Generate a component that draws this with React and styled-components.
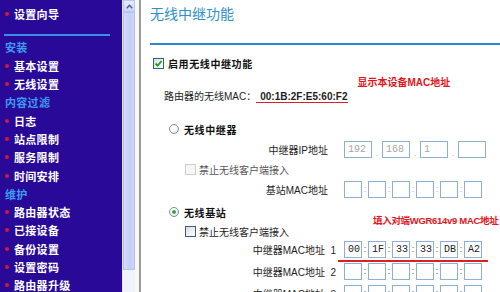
import React from 'react';
import styled, { createGlobalStyle } from 'styled-components';

const Global = createGlobalStyle`
  html, body { margin: 0; padding: 0; background: #fff; }
  body {
    width: 500px; height: 292px; overflow: hidden;
    font-family: "Liberation Sans", "Noto Sans CJK SC", sans-serif;
  }
`;

const Page = styled.div`
  display: flex;
  width: 500px;
  height: 292px;
  overflow: hidden;
`;

const Sidebar = styled.nav`
  width: 122px;
  flex: none;
  background: #290a98;
  display: flex;
  flex-direction: column;
  padding-top: 5px;
  box-sizing: border-box;
  overflow: hidden;
`;

const NavItem = styled.div`
  height: 18.3px;
  flex: none;
  display: flex;
  align-items: center;
  gap: 5px;
  padding-left: 5px;
  color: ${p => (p.$header ? '#3d9cf2' : '#ffffff')};
  font-family: "Noto Sans CJK SC", sans-serif;
  font-size: 11px;
  font-weight: 700;
  letter-spacing: 0.3px;
  white-space: nowrap;
`;

const Bullet = styled.span`
  width: 4px;
  height: 4px;
  border-radius: 50%;
  background: #d8163c;
  flex: none;
`;

const NavRule = styled.div`
  flex: none;
  margin: 11px 12px 2px 4px;
  height: 2px;
  background: #3a8ee8;
`;

const Scrollbar = styled.div`
  width: 13px;
  flex: none;
  display: flex;
  flex-direction: column;
  background: #f1f3fb;
  border-left: 1px solid #dfe3f6;
  box-sizing: border-box;
`;

const ScrollBtn = styled.div`
  height: 12px;
  flex: none;
  background: linear-gradient(#e6ecfc, #c9d5f7);
  border: 1px solid #bac8f0;
  box-sizing: border-box;
  display: flex;
  align-items: center;
  justify-content: center;
`;

const Thumb = styled.div`
  height: 258px;
  flex: none;
  background: linear-gradient(90deg, #d3dcf8, #c3cff5 60%, #cdd7f7);
  border: 1px solid #b3c1ee;
  box-sizing: border-box;
`;

const FrameGap = styled.div`
  width: 4px;
  flex: none;
  background: #f7f7f4;
`;

const FrameEdge = styled.div`
  width: 2px;
  flex: none;
  background: #9a9a9a;
`;

const Main = styled.main`
  flex: 1;
  min-width: 0;
  padding-left: 9px;
  display: flex;
  flex-direction: column;
  font-size: 10px;
  color: #1e1e1e;
`;

const Title = styled.h1`
  margin: 0;
  height: 26px;
  line-height: 26px;
  font-family: "Noto Sans CJK SC", sans-serif;
  font-size: 14px;
  font-weight: 400;
  color: #2e90c6;
  white-space: nowrap;
`;

const Rule = styled.div`
  flex: none;
  margin-top: 17px;
  height: 2px;
  background: #2a86d0;
`;

const Row = styled.div`
  flex: none;
  display: flex;
  align-items: center;
  height: ${p => p.$h || 20}px;
  margin-top: ${p => p.$mt || 0}px;
  padding-left: ${p => p.$pl || 0}px;
  gap: ${p => (p.$gap == null ? 0 : p.$gap)}px;
  white-space: nowrap;
`;

const Strong = styled.span`
  font-weight: 700;
  letter-spacing: 0.6px;
  font-size: 10px;
  color: #111;
`;

const Text = styled.span`
  font-size: 10px;
  color: ${p => (p.$muted ? '#555' : '#1e1e1e')};
`;

const Box = styled.span`
  width: 11px;
  height: 11px;
  flex: none;
  box-sizing: border-box;
  border: 1px solid ${p => (p.$disabled ? '#cfcfcf' : '#335f94')};
  background: ${p => (p.$disabled ? '#f6f6f6' : 'linear-gradient(135deg, #dcdcd6, #ffffff)')};
  display: flex;
  align-items: center;
  justify-content: center;
`;

const RadioDot = styled.span`
  width: 10px;
  height: 10px;
  flex: none;
  border-radius: 50%;
  box-sizing: border-box;
  border: 1px solid #7d8fa8;
  background: radial-gradient(circle at 40% 40%, #ffffff 35%, #dcdcdc);
  display: flex;
  align-items: center;
  justify-content: center;
  &::after {
    content: '';
    width: 4px;
    height: 4px;
    border-radius: 50%;
    background: ${p => (p.$checked ? '#35a83a' : 'transparent')};
  }
`;

const MacBlock = styled.div`
  flex: none;
  display: flex;
  height: 28px;
  padding-left: 14px;
  white-space: nowrap;
`;

const MacText = styled.div`
  align-self: flex-end;
  height: 14px;
  line-height: 14px;
  font-size: 10px;
`;

const MacValue = styled.span`
  font-weight: 700;
  padding-left: 4px;
  border-bottom: 1.5px solid #e02020;
`;

const Note = styled.span`
  align-self: flex-start;
  line-height: 14px;
  font-weight: 700;
  font-size: ${p => p.$size || 10}px;
  letter-spacing: ${p => p.$ls || 0}px;
  color: #e5141b;
  margin-left: ${p => p.$ml || 0}px;
  margin-top: ${p => p.$mtop || 0}px;
  white-space: nowrap;
`;

const Label = styled.span`
  width: ${p => p.$w}px;
  margin-right: ${p => p.$gap}px;
  flex: none;
  text-align: right;
  font-size: 10px;
`;

const Field = styled.span`
  width: ${p => p.$w}px;
  height: 17px;
  flex: none;
  box-sizing: border-box;
  border: 1px solid #8fb0d6;
  background: #fff;
  padding-left: 3px;
  font-family: "Liberation Mono", monospace;
  font-size: 10px;
  line-height: 15px;
  color: ${p => (p.$dim ? '#a8a8a8' : '#222')};
  overflow: hidden;
`;

const Sep = styled.span`
  width: ${p => p.$w}px;
  height: 17px;
  flex: none;
  display: flex;
  align-items: ${p => (p.$dot ? 'flex-end' : 'center')};
  justify-content: center;
  font-size: 9px;
  line-height: 10px;
  color: ${p => (p.$dim ? '#b0b0b0' : '#555')};
`;

const Underline = styled.div`
  flex: none;
  margin-top: 2px;
  margin-left: 188px;
  width: 150px;
  height: 2px;
  background: #e02020;
`;

const navItems = [
  { t: '设置向导' },
  { rule: true },
  { t: '安装', h: true },
  { t: '基本设置' },
  { t: '无线设置' },
  { t: '内容过滤', h: true },
  { t: '日志' },
  { t: '站点限制' },
  { t: '服务限制' },
  { t: '时间安排' },
  { t: '维护', h: true },
  { t: '路由器状态' },
  { t: '已接设备' },
  { t: '备份设置' },
  { t: '设置密码' },
  { t: '路由器升级' },
];

function Check() {
  return (
    <svg width="9" height="9" viewBox="0 0 9 9">
      <path d="M1.5 4.5 L3.6 6.6 L7.6 2" fill="none" stroke="#21a121" strokeWidth="1.8" />
    </svg>
  );
}

function IpFields({ values }) {
  return values.map((v, i) => (
    <React.Fragment key={i}>
      {i > 0 && <Sep $w={10} $dot $dim>.</Sep>}
      <Field $w={28} $dim>{v}</Field>
    </React.Fragment>
  ));
}

function MacFields({ values, dim }) {
  return values.map((v, i) => (
    <React.Fragment key={i}>
      {i > 0 && <Sep $w={6} $dim={dim}>:</Sep>}
      <Field $w={18}>{v}</Field>
    </React.Fragment>
  ));
}

const empty6 = ['', '', '', '', '', ''];

export default function App() {
  return (
    <>
      <Global />
      <Page>
        <Sidebar>
          {navItems.map((n, i) =>
            n.rule ? (
              <NavRule key={i} />
            ) : (
              <NavItem key={i} $header={n.h}>
                {!n.h && <Bullet />}
                {n.t}
              </NavItem>
            )
          )}
        </Sidebar>
        <Scrollbar>
          <ScrollBtn>
            <svg width="7" height="5" viewBox="0 0 7 5">
              <path d="M0.8 4.2 L3.5 1.3 L6.2 4.2" fill="none" stroke="#4d6185" strokeWidth="1.4" />
            </svg>
          </ScrollBtn>
          <Thumb />
        </Scrollbar>
        <FrameGap />
        <FrameEdge />
        <Main>
          <Title>无线中继功能</Title>
          <Rule />
          <Row $h={26} $mt={5} $pl={3} $gap={4}>
            <Box><Check /></Box>
            <Strong>启用无线中继功能</Strong>
          </Row>
          <MacBlock>
            <MacText>
              路由器的无线MAC：<MacValue>00:1B:2F:E5:60:F2</MacValue>
            </MacText>
            <Note $ml={10}>显示本设备MAC地址</Note>
          </MacBlock>
          <Row $h={20} $mt={15} $pl={19} $gap={5}>
            <RadioDot />
            <Strong>无线中继器</Strong>
          </Row>
          <Row $h={20}>
            <Label $w={178} $gap={16}>中继器IP地址</Label>
            <IpFields values={['192', '168', '1', '']} />
          </Row>
          <Row $h={20} $pl={35} $gap={3}>
            <Box $disabled />
            <Text $muted>禁止无线客户端接入</Text>
          </Row>
          <Row $h={20}>
            <Label $w={178} $gap={16}>基站MAC地址</Label>
            <MacFields values={empty6} dim />
          </Row>
          <Row $h={20} $mt={3} $pl={19} $gap={5}>
            <RadioDot $checked />
            <Strong>无线基站</Strong>
          </Row>
          <Row $h={18} $pl={35} $gap={3}>
            <Box />
            <Text>禁止无线客户端接入</Text>
            <Note $ml={81} $mtop={-8} $size={9.5} $ls={-0.3}>填入对端WGR614v9 MAC地址</Note>
          </Row>
          <Row $h={18}>
            <Label $w={186} $gap={8}>中继器MAC地址&nbsp;&nbsp;1</Label>
            <MacFields values={['00', '1F', '33', '33', 'DB', 'A2']} />
          </Row>
          <Underline />
          <Row $h={18}>
            <Label $w={186} $gap={8}>中继器MAC地址&nbsp;&nbsp;2</Label>
            <MacFields values={empty6} />
          </Row>
          <Row $h={18} $mt={4}>
            <Label $w={186} $gap={8}>中继器MAC地址&nbsp;&nbsp;3</Label>
            <MacFields values={empty6} />
          </Row>
        </Main>
      </Page>
    </>
  );
}
